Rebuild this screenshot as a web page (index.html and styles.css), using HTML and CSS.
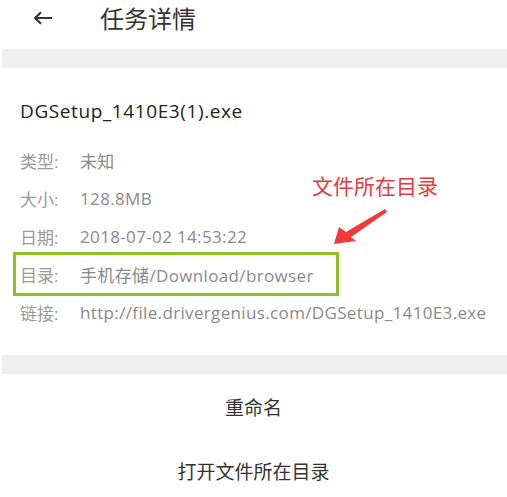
FILE: index.html
```html
<!DOCTYPE html>
<html lang="zh-CN">
<head>
<meta charset="utf-8">
<title>任务详情</title>
<link rel="stylesheet" href="styles.css">
</head>
<body>
<div class="page">
  <header class="header">
    <svg class="back" width="20" height="14" viewBox="0 0 20 14" aria-hidden="true">
      <path d="M19 7H2.5M8 1.2L2.2 7l5.8 5.8" fill="none" stroke="#333" stroke-width="2.2" stroke-linecap="butt" stroke-linejoin="miter"/>
    </svg>
    <h1 class="title">任务详情</h1>
  </header>
  <div class="band"></div>
  <section class="info">
    <div class="filename">DGSetup_1410E3(1).exe</div>
    <div class="row"><span class="label">类型:</span><span class="value">未知</span></div>
    <div class="row"><span class="label">大小:</span><span class="value">128.8MB</span></div>
    <div class="row"><span class="label">日期:</span><span class="value">2018-07-02 14:53:22</span></div>
    <div class="row row-mark"><span class="label">目录:</span><span class="value">手机存储/Download/browser</span></div>
    <div class="row"><span class="label">链接:</span><span class="value">http://file.drivergenius.com/DGSetup_1410E3.exe</span></div>
    <div class="note">文件所在目录</div>
    <svg class="note-arrow" width="60" height="40" viewBox="0 0 60 40" aria-hidden="true">
      <polygon points="0,35 5,18 12,23 51,0 53,3 17,28 22,32" fill="#f0393b"/>
    </svg>
  </section>
  <div class="band"></div>
  <nav class="actions">
    <div class="action">重命名</div>
    <div class="action">打开文件所在目录</div>
  </nav>
</div>
</body>
</html>
```
FILE: styles.css
```css
* { box-sizing: border-box; }
html, body { margin: 0; padding: 0; background: #fff; }
body {
  font-family: "Open Sans", "Noto Sans CJK SC", sans-serif;
  color: #333;
  width: 507px;
  overflow: hidden;
}
.page { position: relative; }
.header {
  height: 49px;
  display: flex;
  align-items: center;
  padding: 0 0 13px 33px;
}
.back { display: block; margin-right: 47px; }
.title {
  margin: 0;
  font-family: "Noto Sans CJK SC", sans-serif;
  font-size: 24px;
  font-weight: 400;
  line-height: 28px;
  color: #333;
}
.band { height: 19px; background: #efefef; margin-left: 2px; }
.info {
  position: relative;
  padding: 31px 0 24px 20px;
}
.filename {
  font-size: 19px;
  line-height: 24px;
  letter-spacing: 0.6px;
  color: #222;
  margin-bottom: 18px;
}
.row {
  display: flex;
  align-items: center;
  height: 38px;
  font-size: 17px;
  white-space: nowrap;
}
.label { color: #9a9a9a; width: 60px; }
.value { color: #8a8a8a; letter-spacing: 0.35px; }
.row-mark {
  width: fit-content;
  margin-left: -4px;
  padding: 0 22px 0 4px;
  outline: 3px solid #8cc21f;
}
.note {
  position: absolute;
  left: 312px;
  top: 104px;
  font-family: "Noto Sans CJK SC", sans-serif;
  font-size: 21px;
  line-height: 26px;
  color: #e8393b;
}
.note-arrow {
  position: absolute;
  left: 334px;
  top: 141px;
}
.actions { display: flex; flex-direction: column; }
.action {
  height: 64px;
  display: flex;
  align-items: center;
  justify-content: center;
  font-family: "Noto Sans CJK SC", sans-serif;
  font-size: 19px;
  color: #333;
}
```
